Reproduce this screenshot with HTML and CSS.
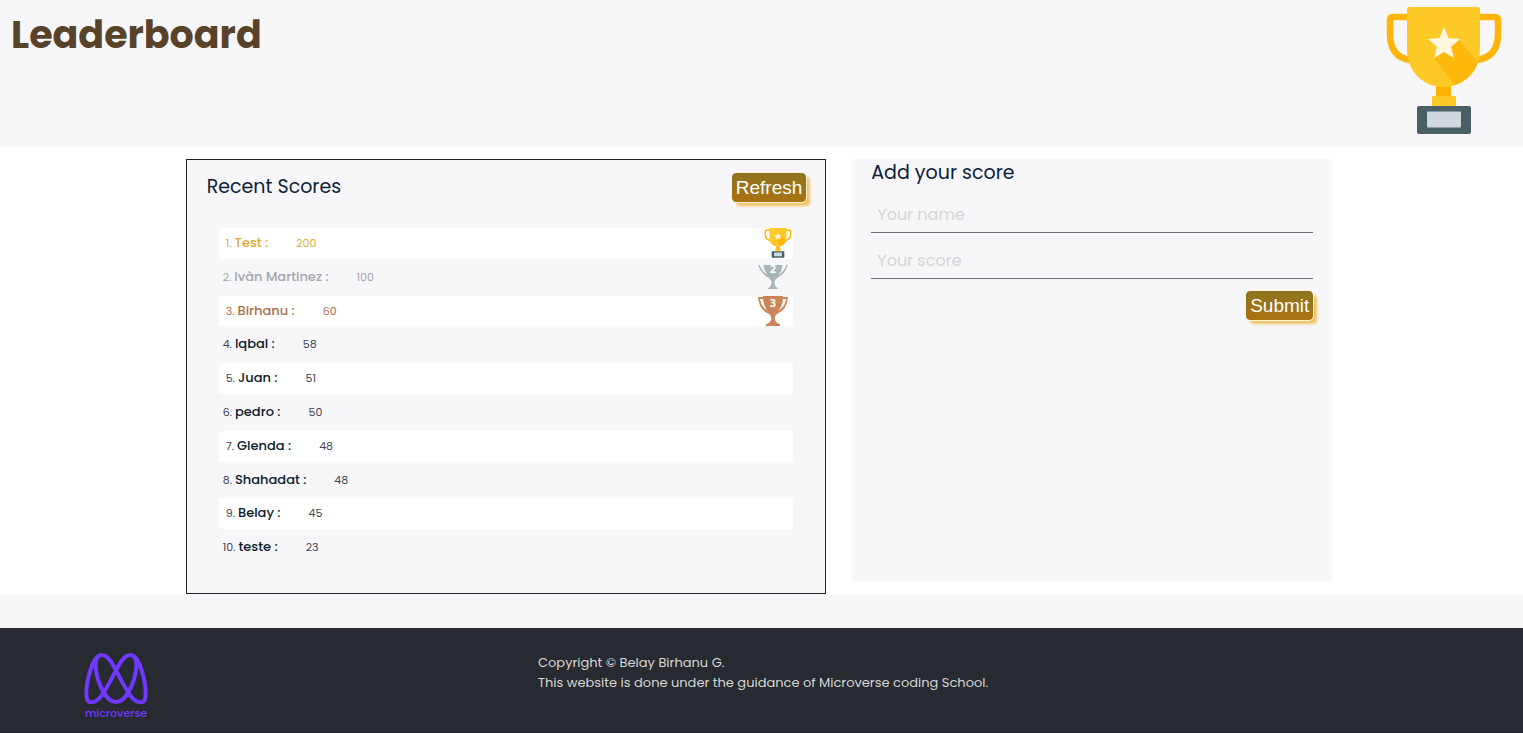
FILE: index.html
```html
<!DOCTYPE html>
<html lang="en">
<head>
<meta charset="utf-8">
<meta name="viewport" content="width=device-width, initial-scale=1">
<title>Leaderboard</title>
<link rel="stylesheet" href="styles.css">
</head>
<body>
<svg class="sprite" aria-hidden="true">
  <symbol id="gold-cup" viewBox="0 0 116 128">
    <path d="M23 10H7Q4 10 4 13V27Q4 50 24 53M92 10H109Q112 10 112 13V27Q112 50 91 53" fill="none" stroke="#ffb508" stroke-width="6.5"/>
    <path d="M50 78H65V93H50Z" fill="#ffb300"/>
    <path d="M23 0H92Q94 0 94 2V43C94 64 78 80 57.500 80C37 80 21 64 21 43V2Q21 0 23 0Z" fill="#ffca28"/>
    <path d="M73 33L92 55Q86 72 68 78L48 51Z" fill="#ffb80c"/>
    <path d="M58 20L62.500 31L74 32L65 40L68 51L58 45L48 51L51 40L42 32L53.500 31Z" fill="#fff8e1"/>
    <path d="M47 89H69Q70 89 70 91V100H46V91Q46 89 47 89Z" fill="#ffca28"/>
    <rect x="31" y="99" width="54" height="28" rx="2" fill="#4b5f67"/>
    <rect x="41" y="104.500" width="34" height="16" rx="1" fill="#cfd8dc"/>
  </symbol>
</svg>
<header class="header">
  <h1 class="title">Leaderboard</h1>
  <svg class="header-cup" role="img" aria-label="Trophy"><use href="#gold-cup"/></svg>
</header>
<main class="main">
  <section class="scores">
    <div class="scores-head">
      <h2 class="heading">Recent Scores</h2>
      <button class="button" type="button">Refresh</button>
    </div>
    <ol class="list">
      <li class="row gold"><span class="rank">1.</span><b class="name">Test :</b><span class="points">200</span><svg class="medal medal-gold" aria-hidden="true"><use href="#gold-cup"/></svg></li>
      <li class="row silver"><span class="rank">2.</span><b class="name">Ivàn Martinez :</b><span class="points">100</span><svg class="medal" viewBox="0 0 30 30" aria-hidden="true"><path class="cup" d="M0 3H1.500Q4 10 11 14Q6 9 5.500 3H24.500Q24 9 19 14Q26 10 28.500 3H30Q27 12 19 16Q16 18 16.500 22Q17 25 20 26V27H10V26Q13 25 13.500 22Q14 18 11 16Q3 12 0 3Z"/><path class="cup" d="M6 3H24Q23 12 17 17H13Q7 12 6 3Z"/><text class="digit" x="15" y="11">2</text></svg></li>
      <li class="row bronze"><span class="rank">3.</span><b class="name">Birhanu :</b><span class="points">60</span><svg class="medal" viewBox="0 0 30 30" aria-hidden="true"><path class="cup" d="M5 0H25V1H30Q29 14 19 18Q16 20 17 24Q18 27 22 28V30H8V28Q12 27 13 24Q14 20 11 18Q1 14 0 1H5Z"/><path class="shine" d="M2 3H5Q6 11 10 15Q3 11 2 3ZM28 3H25Q24 11 20 15Q27 11 28 3Z"/><text class="digit" x="15" y="11">3</text></svg></li>
      <li class="row"><span class="rank">4.</span><b class="name">Iqbal :</b><span class="points">58</span></li>
      <li class="row"><span class="rank">5.</span><b class="name">Juan :</b><span class="points">51</span></li>
      <li class="row"><span class="rank">6.</span><b class="name">pedro :</b><span class="points">50</span></li>
      <li class="row"><span class="rank">7.</span><b class="name">Glenda :</b><span class="points">48</span></li>
      <li class="row"><span class="rank">8.</span><b class="name">Shahadat :</b><span class="points">48</span></li>
      <li class="row"><span class="rank">9.</span><b class="name">Belay :</b><span class="points">45</span></li>
      <li class="row"><span class="rank">10.</span><b class="name">teste :</b><span class="points">23</span></li>
    </ol>
  </section>
  <form class="form">
    <h2 class="heading">Add your score</h2>
    <input class="field" type="text" placeholder="Your name" aria-label="Your name">
    <input class="field" type="text" placeholder="Your score" aria-label="Your score">
    <button class="button submit" type="button">Submit</button>
  </form>
</main>
<footer class="footer">
  <div class="brand">
    <svg class="logo" viewBox="0 0 64 51" aria-hidden="true">
      <path d="M17.700 2C27 2 32 20 44 39C50 49 56 50.500 59.500 48.500C66 43 57 2 46.300 2C37 2 32 20 20 39C14 49 8 50.500 4.500 48.500C-2 43 7 2 17.700 2C8 2 11 24 19 38C23 46 28 49 32 49C36 49 41 46 45 38C53 24 56 2 46.300 2"/>
    </svg>
    <span class="brand-name">microverse</span>
  </div>
  <p class="legal">Copyright © Belay Birhanu G.<br>This website is done under the guidance of Microverse coding School.</p>
</footer>
</body>
</html>
```
FILE: styles.css
```css
* {
  box-sizing: border-box;
}

body {
  margin: 0;
  min-height: 100vh;
  display: flex;
  flex-direction: column;
  background: #f7f7fa;
  color: #172b4d;
  font-family: Poppins, Inter, sans-serif;
}

.sprite {
  position: absolute;
  width: 0;
  height: 0;
}

.header {
  display: flex;
  justify-content: space-between;
  align-items: flex-start;
  padding: 7px 21px 12px 11px;
}

.title {
  margin: 0;
  color: #58432a;
  font-size: 38px;
  line-height: 56px;
  font-weight: 700;
}

.header-cup {
  width: 116px;
  height: 128px;
}

.main {
  display: flex;
  justify-content: center;
  align-items: stretch;
  gap: 26px;
  padding: 12px 5px 0 0;
  background: #fff;
}

.scores {
  width: 42.2%;
  padding: 13px 19px 30px 20px;
  border: 1px solid #202228;
  background: #f7f7fa;
}

.scores-head {
  display: flex;
  justify-content: space-between;
  align-items: flex-start;
}

.heading {
  margin: 0;
  color: #0b2038;
  font-size: 19px;
  line-height: 28px;
  font-weight: 400;
}

.button {
  padding: 0 4px;
  border: 0;
  border-radius: 4px;
  background: linear-gradient(#8f7420, #a97210);
  box-shadow: 4px 4px 3px #f0c35f;
  outline: 1px solid #fdf4df;
  color: #fff;
  font: 19px/29px "Liberation Sans", Arial, sans-serif;
}

.list {
  display: grid;
  grid-auto-rows: 1fr;
  gap: 3px;
  min-height: 335px;
  margin: 26px 13px 0 12px;
  padding: 0;
  list-style: none;
}

.row {
  display: flex;
  align-items: flex-start;
  padding: 0 5px 0 4px;
  border-radius: 3px;
  font-size: 11px;
  line-height: 30px;
}

.row:nth-child(odd) {
  padding: 0 5px 0 7px;
  background: #fff;
}

.rank,
.points {
  color: #404653;
  font-weight: 400;
}

.name {
  margin: 0 28px 0 3px;
  color: #0b1b2b;
  font-size: 13px;
  font-weight: 500;
}

.gold span,
.gold .name {
  color: #d9ac35;
}

.silver span,
.silver .name {
  color: #a5a5ad;
}

.bronze span,
.bronze .name {
  color: #a9714b;
}

.medal {
  width: 30px;
  height: 30px;
  margin-left: auto;
}

.row .medal-gold {
  margin-right: -5px;
}

.silver .cup {
  fill: #a6b6b4;
}

.bronze .cup {
  fill: #ca8558;
}

.shine {
  fill: #fff;
}

.digit {
  fill: #fff;
  font: 700 11px "Open Sans", sans-serif;
  text-anchor: middle;
}

.form {
  display: flex;
  flex-direction: column;
  width: 480px;
  margin-bottom: 13px;
  padding: 0 19px;
  background: #f7f7fa;
}

.field {
  height: 36px;
  margin-top: 10px;
  padding: 0 6px;
  border: 0;
  border-bottom: 1px solid #707178;
  background: transparent;
  font: 16px Poppins, Inter, sans-serif;
}

.field::placeholder {
  color: #d4d4d6;
}

.submit {
  align-self: flex-end;
  margin-top: 12px;
}

.footer {
  display: flex;
  flex: 1;
  align-items: flex-start;
  margin-top: 34px;
  padding: 25px 84px 10px;
  border-bottom: 4px solid #222327;
  background: #282a31;
}

.brand {
  display: flex;
  flex-direction: column;
  align-items: center;
  width: 64px;
  margin-right: 390px;
  color: #7138ff;
}

.logo {
  width: 64px;
  height: 51px;
  fill: none;
  stroke: currentColor;
  stroke-width: 4;
}

.brand-name {
  font-size: 11px;
  line-height: 18px;
  font-weight: 500;
}

.legal {
  margin: 0;
  color: #d6d6d6;
  font-size: 13px;
  line-height: 20px;
}
```
